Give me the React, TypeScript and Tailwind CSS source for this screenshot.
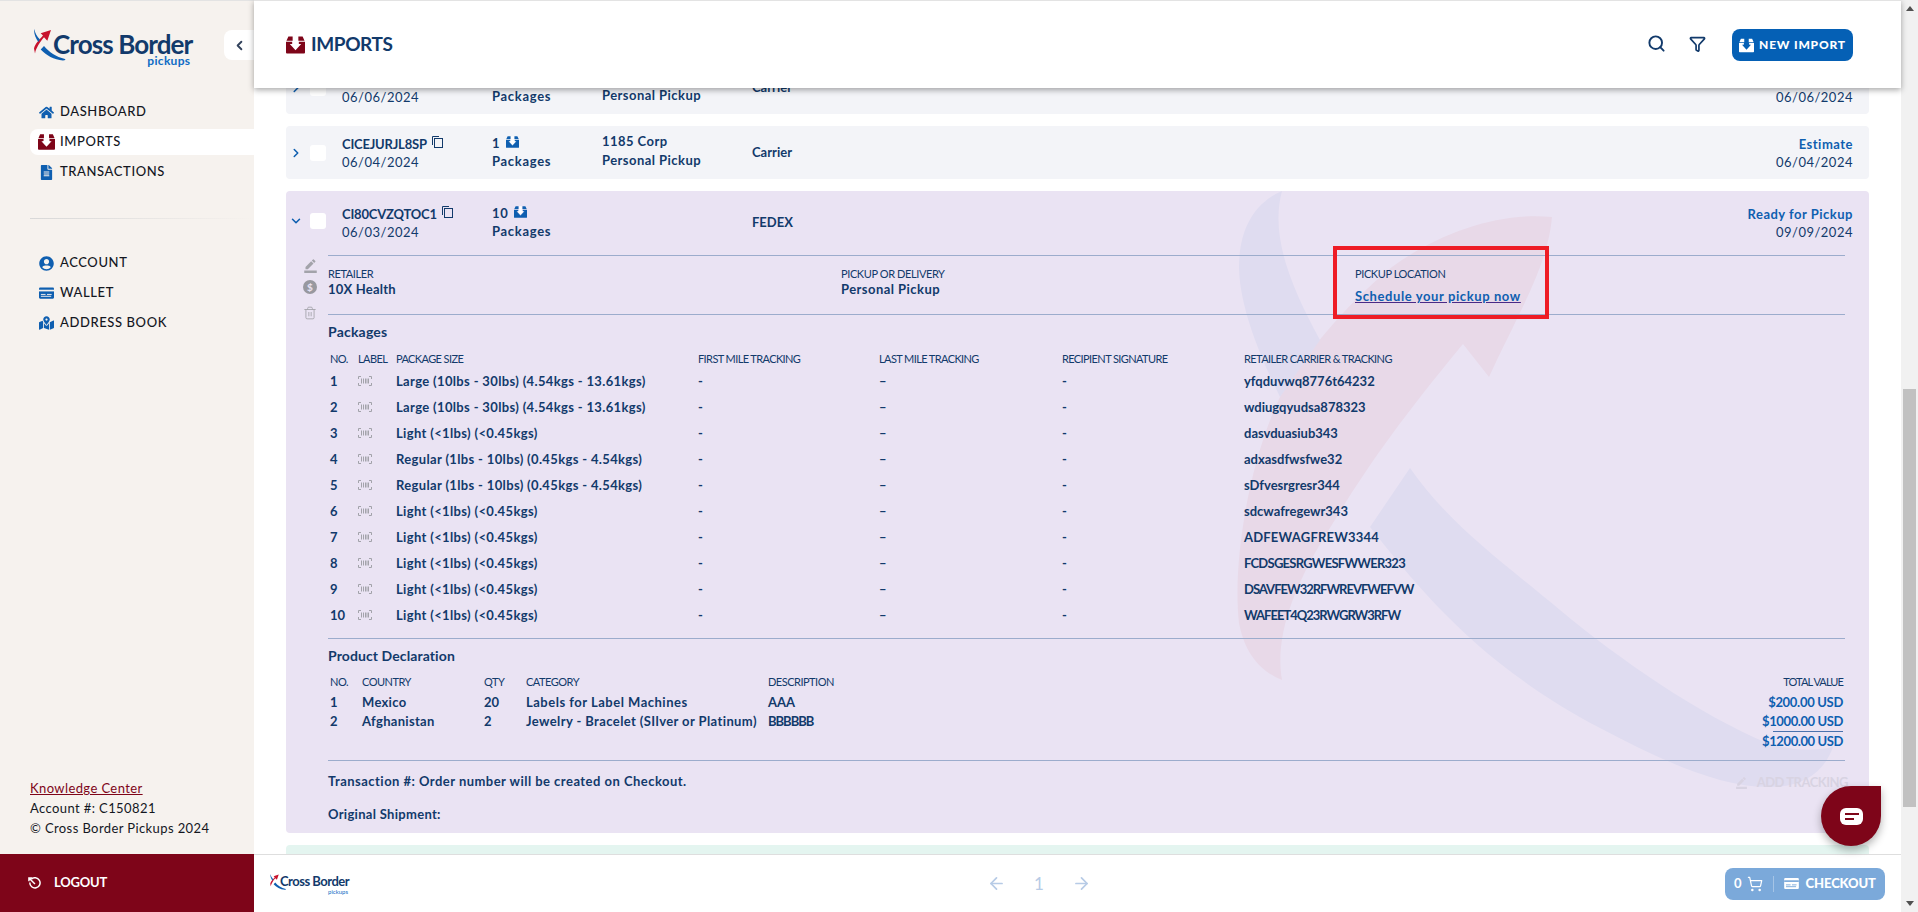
import { ChevronDown, ChevronLeft, ChevronRight, Filter, ArrowLeft, ArrowRight, Search, ShoppingCart, Trash2 } from "lucide-react";
import { FaFileAlt, FaHome, FaMapMarkedAlt, FaUserCircle } from "react-icons/fa";
import { MdBorderColor } from "react-icons/md";

const packages = [
  ["1", "Large (10lbs - 30lbs) (4.54kgs - 13.61kgs)", "yfqduvwq8776t64232", ""],
  ["2", "Large (10lbs - 30lbs) (4.54kgs - 13.61kgs)", "wdiugqyudsa878323", ""],
  ["3", "Light (<1lbs) (<0.45kgs)", "dasvduasiub343", ""],
  ["4", "Regular (1lbs - 10lbs) (0.45kgs - 4.54kgs)", "adxasdfwsfwe32", ""],
  ["5", "Regular (1lbs - 10lbs) (0.45kgs - 4.54kgs)", "sDfvesrgresr344", ""],
  ["6", "Light (<1lbs) (<0.45kgs)", "sdcwafregewr343", ""],
  ["7", "Light (<1lbs) (<0.45kgs)", "ADFEWAGFREW3344", "tracking-[0.2px]"],
  ["8", "Light (<1lbs) (<0.45kgs)", "FCDSGESRGWESFWWER323", "tracking-[-0.75px]"],
  ["9", "Light (<1lbs) (<0.45kgs)", "DSAVFEW32RFWREVFWEFVW", "tracking-[-1px]"],
  ["10", "Light (<1lbs) (<0.45kgs)", "WAFEET4Q23RWGRW3RFW", "tracking-[-1px]"],
];

function BoxIcon({ className, arrow }: { className: string; arrow: string }) {
  return (
    <svg viewBox="0 0 20 18" className={className} fill="currentColor">
      <path d="M2.500 0H7v4.500H0.500zM13 0h4.500l2 4.500H13zM0 5.500h6.500V8H4l6 6.500L16 8h-2.500V5.500H20V17a1 1 0 0 1-1 1H1a1 1 0 0 1-1-1z" />
      <path d="M8 0h4v8h2.500L10 13 5.500 8H8z" fill={arrow} />
    </svg>
  );
}

function XMark({ className }: { className: string }) {
  return (
    <svg viewBox="0 0 33 34" className={className}>
      <path d="M17 1L6.700 4.300L9 6.500C5 11 1 15 0 19.500L1 24.500C2 19 6 13 10 8.300L13.300 11.700Z" fill="#c8132d" />
      <path d="M0.300 0C-0.500 4 1.500 9 4.300 13L6 10.500C3 7.500 1 4 0.300 0Z" fill="#0f5fb0" />
      <path d="M10 17C15 23 22 28 31 30C32 30.500 31 31.500 29 31.500C20 31 12 26 6.700 20.500Z" fill="#0f5fb0" />
    </svg>
  );
}

function Logo({ small }: { small?: boolean }) {
  if (small) {
    return (
      <div className="flex items-start">
        <XMark className="w-[17px] h-[17px]" />
        <div className="flex flex-col items-end -ml-[7px]">
          <span className="text-[13px] leading-[15px] font-bold tracking-[-0.5px] text-[#123a6b]">Cross Border</span>
          <span className="text-[6px] leading-[5px] text-[#0f6cc5] pr-px">pickups</span>
        </div>
      </div>
    );
  }
  return (
    <div className="flex items-start">
      <XMark className="w-[33px] h-[34px]" />
      <div className="flex flex-col items-end -ml-[14px]">
        <span className="text-[26px] leading-[20px] mt-[5px] font-bold tracking-[-0.9px] text-[#123a6b]">Cross Border</span>
        <span className="text-[12px] leading-[9px] mt-[2px] font-bold text-[#0f6cc5] tracking-[0.3px] pr-[2px]">pickups</span>
      </div>
    </div>
  );
}

function CardIcon({ className, line }: { className: string; line: string }) {
  return (
    <svg viewBox="0 0 16 12" className={className} fill="currentColor">
      <rect width="16" height="12" rx="1.200" />
      <rect x="0" y="2.500" width="16" height="1.800" fill={line} />
      <rect x="2" y="7" width="5" height="1" fill={line} />
      <rect x="8.500" y="7" width="5" height="1" fill={line} />
      <rect x="2" y="9" width="11" height="1" fill={line} />
    </svg>
  );
}

function CopyIcon() {
  return (
    <svg viewBox="0 0 11 12" className="w-[11px] h-[12px] ml-[5px] -mt-[3px] text-[#123a6b]" fill="none" stroke="currentColor">
      <path d="M0.500 9V0.500H7" />
      <rect x="2.500" y="2.500" width="8" height="9" />
    </svg>
  );
}

function BarcodeIcon() {
  return (
    <svg viewBox="0 0 14 10" className="w-[14px] h-[10px] -mt-[2px] text-[#a3a3aa]" fill="none" stroke="currentColor">
      <path d="M0.500 3V0.500H3M11 0.500h2.500V3M0.500 7v2.500H3M11 9.500h2.500V7" />
      <path d="M3.500 2.500v5M5.500 2.500v5M7.500 2.500v5M9 2.500v5M10.500 2.500v5" />
    </svg>
  );
}

function NavItem({ icon, label, active }: { icon: React.ReactNode; label: string; active?: boolean }) {
  return (
    <div className={`flex items-center h-[26px] my-[2px] ml-[30px] rounded-l-[8px] ${active ? "bg-white" : ""}`}>
      <span className="w-[30px] flex justify-center shrink-0 pl-[2px]">{icon}</span>
      <span className="text-[13px] font-medium tracking-[0.6px] text-[#14171f]">{label}</span>
    </div>
  );
}

function Sidebar() {
  return (
    <aside className="flex-1 bg-[#f6f2ee] border-t border-[#e3e3e3] flex flex-col relative">
      <div className="pl-[34px] pt-[28px] h-[89px]">
        <Logo />
      </div>
      <div className="absolute left-[224px] top-[29px] w-[30px] h-[30px] bg-white rounded-l-[8px] flex items-center justify-center">
        <ChevronLeft className="w-[15px] h-[15px] text-[#33425c]" strokeWidth={3} />
      </div>
      <nav className="flex flex-col mt-[7px]">
        <NavItem icon={<FaHome className="w-[15px] h-[15px] text-[#0f5fb0]" />} label="DASHBOARD" />
        <NavItem active icon={<BoxIcon className="w-[17px] h-[16px] text-[#7e0519]" arrow="#ffffff" />} label="IMPORTS" />
        <NavItem icon={<FaFileAlt className="w-[13px] h-[15px] text-[#0f5fb0]" />} label="TRANSACTIONS" />
      </nav>
      <div className="ml-[30px] mt-[31px] mb-[29px] h-px bg-gradient-to-r from-[#d8d8d8] to-transparent" />
      <nav className="flex flex-col">
        <NavItem icon={<FaUserCircle className="w-[15px] h-[15px] text-[#0f5fb0]" />} label="ACCOUNT" />
        <NavItem icon={<CardIcon className="w-[15px] h-[12px] text-[#0f5fb0]" line="#f6f2ee" />} label="WALLET" />
        <NavItem icon={<FaMapMarkedAlt className="w-[15px] h-[14px] text-[#0f5fb0]" />} label="ADDRESS BOOK" />
      </nav>
      <div className="mt-auto pl-[30px] pb-[16px] text-[13px] leading-[20px] text-[#14171f] tracking-[0.4px]">
        <div className="text-[#7e0519] underline">Knowledge Center</div>
        <div>Account #: C150821</div>
        <div>© Cross Border Pickups 2024</div>
      </div>
    </aside>
  );
}

function RowSummary({ id, pkgCount, retailer, carrier, status, date, statusDate, open }: {
  id: string; pkgCount: string; retailer?: string; carrier: string; status: string; date: string; statusDate: string; open?: boolean;
}) {
  const Chevron = open ? ChevronDown : ChevronRight;
  return (
    <div className="grid grid-cols-[56px_150px_110px_150px_1fr_auto] pr-[16px] h-[53px] items-center">
      <div className={`flex items-center pl-[3px] ${open ? "-mt-[3px]" : ""}`}>
        <Chevron className="w-[14px] h-[14px] text-[#0f5fb0] mr-[7px]" strokeWidth={2.600} />
        <span className="w-[16px] h-[16px] bg-white rounded-[3px]" />
      </div>
      <div>
        <div className="flex items-center text-[13px] leading-[18px] font-bold text-[#123a6b] tracking-[-0.2px]">
          {id}
          <CopyIcon />
        </div>
        <div className="text-[13px] leading-[18px] text-[#123a6b] tracking-[0.5px]">{date}</div>
      </div>
      <div className="text-[13px] leading-[18px] -mt-[2px] font-bold text-[#123a6b] tracking-[0.7px]">
        <div className="flex items-center">
          {pkgCount}
          <BoxIcon className="w-[13px] h-[12px] ml-[6px] -mt-[2px] text-[#0f5fb0]" arrow="#ffffff" />
        </div>
        <div>Packages</div>
      </div>
      <div className="text-[13px] leading-[19px] -mt-[3px] font-bold text-[#123a6b] tracking-[0.45px]">
        {retailer && <div>{retailer}</div>}
        <div>{retailer ? "Personal Pickup" : ""}</div>
      </div>
      <div className="text-[13px] font-bold text-[#123a6b]">{carrier}</div>
      <div className="text-right">
        <div className="text-[13px] leading-[18px] font-bold text-[#0f5fb0] tracking-[0.5px]">{status}</div>
        <div className="text-[13px] leading-[18px] text-[#123a6b] tracking-[0.5px]">{statusDate}</div>
      </div>
    </div>
  );
}

function Watermark() {
  return (
    <svg className="absolute left-0 top-0 w-[1583px] h-[642px] pointer-events-none" viewBox="286 191 1583 642">
      <path d="M1552 217C1500 212 1440 232 1392 267C1345 305 1300 360 1280 397C1250 460 1232 560 1239 623C1245 655 1262 672 1282 680C1275 640 1290 590 1333 523C1365 470 1400 420 1463 344L1489 377C1520 310 1548 265 1552 217Z" fill="#e8d9e8" />
      <path d="M1282 191C1250 205 1239 235 1239 268C1240 310 1262 360 1280 397L1320 340C1290 285 1270 235 1282 191Z" fill="#dfdcf0" />
      <path d="M1410 468L1370 527C1420 590 1480 665 1600 728C1660 760 1720 787 1767 787C1805 788 1825 770 1833 747C1810 752 1790 750 1767 743C1700 715 1620 660 1560 610C1500 560 1450 525 1410 468Z" fill="#dfdcf0" />
    </svg>
  );
}

function Divider() {
  return <div className="h-px bg-[#9caccc]" />;
}

function ExpandedDetails() {
  return (
    <div className="relative flex">
      <div className="w-[42px] pl-[10px] pr-[4px] pt-[1px] flex flex-col items-center shrink-0">
        <MdBorderColor className="w-[15px] h-[15px] mt-[2px] text-[#a3a3aa]" />
        <span className="w-[14px] h-[14px] mt-[7px] rounded-full bg-[#98989f] text-[#eae3f3] text-[10px] leading-[14px] text-center font-bold">$</span>
        <Trash2 className="w-[14px] h-[16px] mt-[11px] text-[#a3a3aa]" strokeWidth={1.500} />
      </div>
      <div className="flex-1 mr-[24px] text-[#123a6b]">
        <Divider />
        <div className="grid grid-cols-[513px_514px_1fr] h-[58px] pt-[11px]">
          <div>
            <div className="text-[11px] leading-[14px] tracking-[-0.4px]">RETAILER</div>
            <div className="text-[13px] leading-[17px] font-bold tracking-[0.2px]">10X Health</div>
          </div>
          <div>
            <div className="text-[11px] leading-[14px] tracking-[-0.4px]">PICKUP OR DELIVERY</div>
            <div className="text-[13px] leading-[17px] font-bold tracking-[0.45px]">Personal Pickup</div>
          </div>
          <div>
            <div className="text-[11px] leading-[14px] tracking-[-0.4px]">PICKUP LOCATION</div>
            <div className="text-[13px] leading-[17px] mt-[7px] font-bold text-[#0f5fb0] tracking-[0.6px] underline decoration-[#4a2a86]">Schedule your pickup now</div>
          </div>
        </div>
        <Divider />
        <div className="text-[14px] leading-[16px] font-bold mt-[9px] mb-[9px] tracking-[0.2px]">Packages</div>
        <div className="grid grid-cols-[28px_38px_302px_181px_183px_182px_1fr] pl-[2px] h-[20px] items-center text-[11px] tracking-[-0.6px]">
          <div>NO.</div>
          <div>LABEL</div>
          <div>PACKAGE SIZE</div>
          <div>FIRST MILE TRACKING</div>
          <div>LAST MILE TRACKING</div>
          <div>RECIPIENT SIGNATURE</div>
          <div>RETAILER CARRIER &amp; TRACKING</div>
        </div>
        {packages.map(([no, size, tracking, spacing]) => (
          <div key={no} className="grid grid-cols-[28px_38px_302px_181px_183px_182px_1fr] pl-[2px] h-[26px] items-center text-[13px] font-bold">
            <div>{no}</div>
            <div><BarcodeIcon /></div>
            <div className="tracking-[0.35px]">{size}</div>
            <div>-</div>
            <div>–</div>
            <div>-</div>
            <div className={spacing}>{tracking}</div>
          </div>
        ))}
        <div className="mt-[9px]"><Divider /></div>
        <div className="text-[14px] leading-[16px] font-bold mt-[9px] mb-[9px] tracking-[0.1px]">Product Declaration</div>
        <div className="grid grid-cols-[32px_122px_42px_242px_1fr_auto] pl-[2px] pr-[2px] h-[18px] items-center text-[11px] tracking-[-0.5px]">
          <div>NO.</div>
          <div>COUNTRY</div>
          <div>QTY</div>
          <div>CATEGORY</div>
          <div>DESCRIPTION</div>
          <div className="tracking-[-0.9px]">TOTAL VALUE</div>
        </div>
        <div className="mt-[2px] grid grid-cols-[32px_122px_42px_242px_1fr_auto] pl-[2px] pr-[2px] h-[19px] items-center text-[13px] font-bold">
          <div>1</div>
          <div className="tracking-[0.3px]">Mexico</div>
          <div>20</div>
          <div className="tracking-[0.5px]">Labels for Label Machines</div>
          <div>AAA</div>
          <div className="text-[#0f5fb0] tracking-[-0.3px]">$200.00 USD</div>
        </div>
        <div className="grid grid-cols-[32px_122px_42px_242px_1fr_auto] pl-[2px] pr-[2px] h-[19px] items-center text-[13px] font-bold">
          <div>2</div>
          <div className="tracking-[0.3px]">Afghanistan</div>
          <div>2</div>
          <div className="tracking-[0.4px]">Jewelry - Bracelet (SIlver or Platinum)</div>
          <div className="tracking-[-1px]">BBBBBB</div>
          <div className="text-[#0f5fb0] tracking-[-0.4px]">$1000.00 USD</div>
        </div>
        <div className="flex justify-end pr-[2px] h-[19px]">
          <div className="w-[70px] border-t border-[#4a72ad] flex justify-end">
            <span className="text-[13px] leading-[18px] font-bold text-[#0f5fb0] whitespace-nowrap tracking-[-0.4px]">$1200.00 USD</span>
          </div>
        </div>
        <div className="mt-[10px]"><Divider /></div>
        <div className="flex justify-between items-center mt-[13px] h-[16px] text-[13px] font-bold">
          <div className="tracking-[0.47px]">Transaction #: Order number will be created on Checkout.</div>
          <div className="flex items-center text-[#d8d3e2] -mr-[3px] mt-[1px] tracking-[-0.5px]">
            <MdBorderColor className="w-[13px] h-[13px] mr-[9px]" />
            ADD TRACKING
          </div>
        </div>
        <div className="text-[13px] leading-[16px] font-bold mt-[16px] pb-[11px] tracking-[0.3px]">Original Shipment:</div>
      </div>
    </div>
  );
}

export default function App() {
  return (
    <div className="flex h-screen overflow-hidden bg-white font-['Lato','Liberation_Sans',sans-serif]">
      <div className="w-[254px] shrink-0 flex flex-col">
        <Sidebar />
        <div className="h-[58px] bg-[#7e0519] flex items-center pl-[28px] text-white">
          <svg viewBox="0 0 14 14" className="w-[13px] h-[13px] mr-[13px]" fill="none" stroke="currentColor" strokeWidth="1.600">
            <path d="M3.500 2.500A5.500 5.500 0 1 1 2 6" />
            <path d="M7.500 7.500L1 1M1 4.500V1h3.500" />
          </svg>
          <span className="text-[13px] font-bold tracking-[-0.2px]">LOGOUT</span>
        </div>
      </div>

      <div className="flex-1 min-w-0 flex flex-col relative">
        <header className="h-[88px] shrink-0 bg-white border-t border-[#e3e3e3] relative z-10 shadow-[0_2px_6px_rgba(0,0,0,0.35)] flex items-center pl-[32px] pr-[48px]">
          <BoxIcon className="w-[19px] h-[18px] text-[#7e0519]" arrow="#ffffff" />
          <span className="ml-[6px] text-[19px] font-bold text-[#123a6b] tracking-[-0.4px]">IMPORTS</span>
          <Search className="ml-auto w-[19px] h-[19px] text-[#123a6b] -mt-[2px]" strokeWidth={2.400} />
          <Filter className="ml-[23px] w-[17px] h-[18px] text-[#123a6b] -mt-[2px]" strokeWidth={2.400} />
          <button className="ml-[26px] w-[121px] h-[32px] rounded-[8px] bg-[#0560b5] text-white flex items-center justify-center mt-[1px]">
            <BoxIcon className="w-[15px] h-[15px]" arrow="#0560b5" />
            <span className="ml-[5px] text-[12px] font-black tracking-[0.8px]">NEW IMPORT</span>
          </button>
        </header>

        <main className="flex-1 min-h-0 overflow-hidden pl-[32px] pr-[32px]">
          <div className="-mt-[27px] flex flex-col gap-[12px]">
            <div className="bg-[#f3f4f8] rounded-[4px]">
              <RowSummary id="CICEJURJL9SP" pkgCount="1" retailer="1185 Corp" carrier="Carrier" status="Estimate" date="06/06/2024" statusDate="06/06/2024" />
            </div>
            <div className="bg-[#f3f4f8] rounded-[4px]">
              <RowSummary id="CICEJURJL8SP" pkgCount="1" retailer="1185 Corp" carrier="Carrier" status="Estimate" date="06/04/2024" statusDate="06/04/2024" />
            </div>
            <div className="relative bg-[#eae3f3] rounded-[4px] overflow-hidden h-[642px]">
              <Watermark />
              <div className="relative h-[64px]">
                <div className="pt-[5px]">
                  <RowSummary open id="CI80CVZQTOC1" pkgCount="10" carrier="FEDEX" status="Ready for Pickup" date="06/03/2024" statusDate="09/09/2024" />
                </div>
              </div>
              <ExpandedDetails />
            </div>
            <div className="h-[40px] bg-[#e4f5f0] rounded-[4px]" />
          </div>
        </main>

        <footer className="h-[58px] shrink-0 bg-white border-t border-[#dedede] relative z-10 flex items-center pl-[16px] pr-[16px]">
          <Logo small />
          <div className="absolute left-[733px] flex items-center text-[#b7cbe6]">
            <ArrowLeft className="w-[19px] h-[19px]" strokeWidth={2.200} />
            <span className="mx-[28px] text-[17px]">1</span>
            <ArrowRight className="w-[19px] h-[19px]" strokeWidth={2.200} />
          </div>
          <div className="ml-auto w-[160px] h-[32px] rounded-[8px] bg-[#7ba9da] text-white font-bold flex items-center pl-[9px] text-[13px]">
            <span>0</span>
            <ShoppingCart className="w-[16px] h-[16px] ml-[5px]" strokeWidth={1.800} />
            <span className="w-px h-[16px] bg-[#a5c4e6] mx-[10px]" />
            <CardIcon className="w-[15px] h-[11px]" line="#7ba9da" />
            <span className="ml-[7px] font-black tracking-[-0.1px]">CHECKOUT</span>
          </div>
        </footer>

        <div className="absolute left-[1567px] top-[786px] z-20 w-[60px] h-[60px] bg-[#7e0519] rounded-full rounded-tr-[8px] shadow-[0_4px_8px_rgba(0,0,0,0.3)] flex items-center justify-center">
          <div className="w-[23px] h-[17px] bg-white rounded-[6px] flex flex-col justify-center gap-[3px] pl-[5px]">
            <span className="block w-[14px] h-[2px] bg-[#7e0519]" />
            <span className="block w-[9px] h-[2px] bg-[#7e0519]" />
          </div>
        </div>

        <div className="absolute left-[1079px] top-[246px] z-20 w-[216px] h-[73px] border-[4px] border-[#ee1c25]" />
      </div>

      <div className="w-[17px] shrink-0 bg-[#f1f1f1] flex flex-col items-center">
        <div className="h-[17px] flex items-center justify-center">
          <span className="w-0 h-0 border-x-[4px] border-x-transparent border-b-[5px] border-b-[#505050]" />
        </div>
        <div className="mt-[372px] w-[13px] h-[418px] bg-[#c1c1c1]" />
        <div className="mt-auto h-[17px] flex items-center justify-center">
          <span className="w-0 h-0 border-x-[4px] border-x-transparent border-t-[5px] border-t-[#505050]" />
        </div>
      </div>
    </div>
  );
}
